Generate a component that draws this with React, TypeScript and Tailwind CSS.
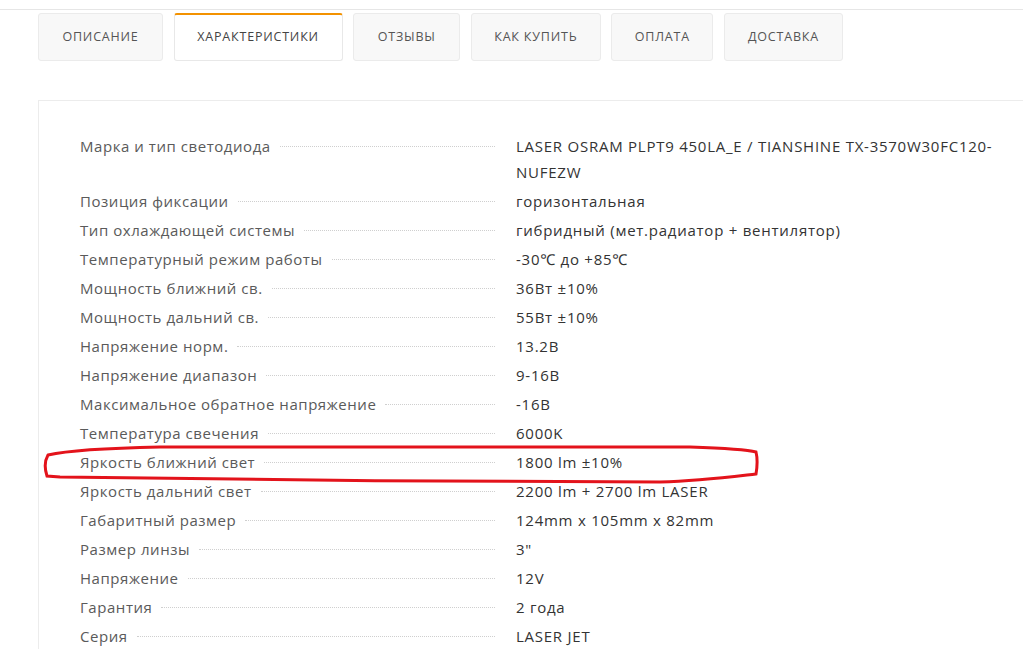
import React from "react";

const tabs = ["ОПИСАНИЕ", "ХАРАКТЕРИСТИКИ", "ОТЗЫВЫ", "КАК КУПИТЬ", "ОПЛАТА", "ДОСТАВКА"];
const tabW = [125, 169, 107, 130, 102, 119];

const rows: [string, string][] = [
  ["Марка и тип светодиода", "LASER OSRAM PLPT9 450LA_E / TIANSHINE TX-3570W30FC120-NUFEZW"],
  ["Позиция фиксации", "горизонтальная"],
  ["Тип охлаждающей системы", "гибридный (мет.радиатор + вентилятор)"],
  ["Температурный режим работы", "-30℃ до +85℃"],
  ["Мощность ближний св.", "36Вт ±10%"],
  ["Мощность дальний св.", "55Вт ±10%"],
  ["Напряжение норм.", "13.2В"],
  ["Напряжение диапазон", "9-16В"],
  ["Максимальное обратное напряжение", "-16В"],
  ["Температура свечения", "6000K"],
  ["Яркость ближний свет", "1800 lm ±10%"],
  ["Яркость дальний свет", "2200 lm + 2700 lm LASER"],
  ["Габаритный размер", "124mm x 105mm x 82mm"],
  ["Размер линзы", "3\""],
  ["Напряжение", "12V"],
  ["Гарантия", "2 года"],
  ["Серия", "LASER JET"],
];

export default function App() {
  return (
    <div
      className="relative w-[1023px] h-[664px] overflow-hidden bg-white"
      style={{ fontFamily: '"Open Sans", "Noto Sans", sans-serif' }}
    >
      <div className="h-[10px] border-b border-[#e6e6e6]" />
      <div className="flex gap-[10.6px] pl-[38px] pt-[3px]">
        {tabs.map((t, i) => (
          <div
            key={t}
            style={{ width: tabW[i] }}
            className={
              i === 1
                ? "h-[48px] flex items-center justify-center rounded-[3px] border border-[#e8e8e8] border-t-2 border-t-[#f39200] bg-white text-[12.5px] tracking-[0.8px] text-[#444]"
                : "h-[48px] flex items-center justify-center rounded-[3px] border border-[#ebebeb] bg-[#f8f8f8] text-[12.5px] tracking-[0.8px] text-[#555]"
            }
          >
            {t}
          </div>
        ))}
      </div>
      <div className="ml-[38px] mt-[39px] border-t border-l border-[#ececec] pl-[41px] pt-[32px] flex flex-col gap-[3px]">
        {rows.map(([k, v]) => (
          <div key={k} className="flex text-[15px] leading-[26px]">
            <div className="w-[436px] shrink-0 flex items-start pr-[21px]">
              <span className="text-[#5a5a5a] whitespace-nowrap tracking-[0.55px]">{k}</span>
              <span className="flex-1 ml-[9px] mt-[13px] border-t border-dotted border-[#cfcfcf]" />
            </div>
            <div className="w-[490px] text-[#333] tracking-[0.75px]">{v}</div>
          </div>
        ))}
      </div>
      <svg className="absolute left-0 top-0 pointer-events-none" width="1023" height="664">
        <path
          d="M 48 455 C 70 450, 110 448, 160 447 L 690 447 C 720 448, 745 449, 756 452 C 758 460, 757 468, 756 474 C 730 477, 700 481, 660 482 C 500 482, 200 480, 60 477 L 47 476 C 45 470, 44 462, 48 455 Z"
          fill="none"
          stroke="#e3131b"
          strokeWidth="3"
        />
      </svg>
    </div>
  );
}
